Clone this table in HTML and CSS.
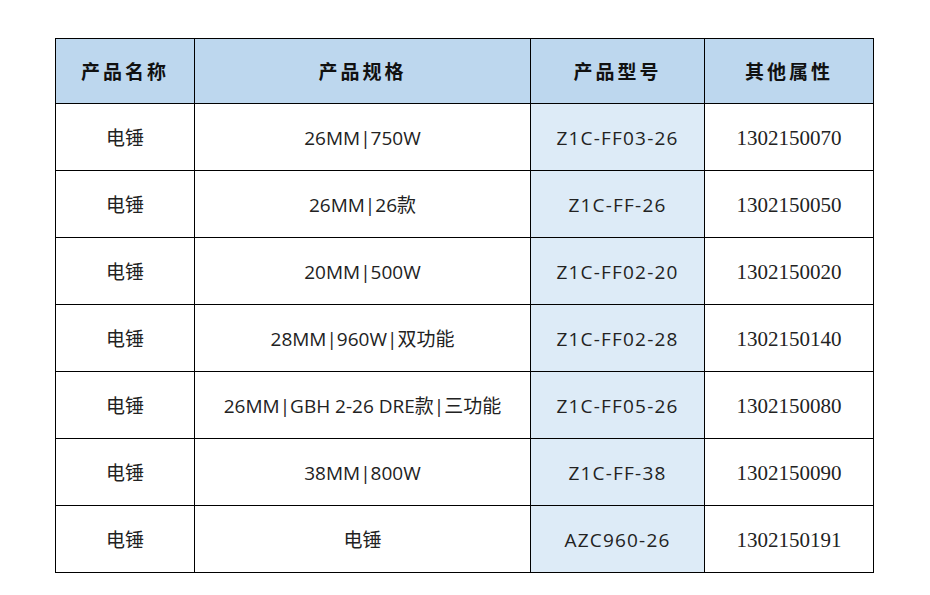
FILE: index.html
```html
<!DOCTYPE html>
<html lang="zh">
<head>
<meta charset="utf-8">
<link rel="stylesheet" href="styles.css">
</head>
<body>
<div class="wrap">
<table class="grid">
  <colgroup>
    <col class="c1"><col class="c2"><col class="c3"><col class="c4">
  </colgroup>
  <thead>
    <tr><th>产品名称</th><th>产品规格</th><th>产品型号</th><th>其他属性</th></tr>
  </thead>
  <tbody>
    <tr><td>电锤</td><td>26MM|750W</td><td class="model">Z1C-FF03-26</td><td class="num">1302150070</td></tr>
    <tr><td>电锤</td><td>26MM|26款</td><td class="model">Z1C-FF-26</td><td class="num">1302150050</td></tr>
    <tr><td>电锤</td><td>20MM|500W</td><td class="model">Z1C-FF02-20</td><td class="num">1302150020</td></tr>
    <tr><td>电锤</td><td>28MM|960W|双功能</td><td class="model">Z1C-FF02-28</td><td class="num">1302150140</td></tr>
    <tr><td>电锤</td><td>26MM|GBH 2-26 DRE款|三功能</td><td class="model">Z1C-FF05-26</td><td class="num">1302150080</td></tr>
    <tr><td>电锤</td><td>38MM|800W</td><td class="model">Z1C-FF-38</td><td class="num">1302150090</td></tr>
    <tr><td>电锤</td><td>电锤</td><td class="model">AZC960-26</td><td class="num">1302150191</td></tr>
  </tbody>
</table>
</div>
</body>
</html>
```

FILE: styles.css
```css
html, body {
  margin: 0;
  padding: 0;
  background: #ffffff;
}
.wrap {
  padding: 38px 0 0 55px;
}
.grid {
  border-collapse: collapse;
  table-layout: fixed;
  width: 818px;
  font-family: "Open Sans", "Noto Sans CJK SC", sans-serif;
  color: #222222;
}
.c1 { width: 139px; }
.c2 { width: 336px; }
.c3 { width: 174px; }
.c4 { width: 169px; }
.grid thead tr { height: 65px; }
.grid tbody tr { height: 67px; }
.grid th, .grid td {
  border: 1px solid #000000;
  text-align: center;
  vertical-align: middle;
  padding: 0;
  line-height: 24px;
}
.grid th {
  background: #bdd7ee;
  font-family: "Noto Sans CJK SC", sans-serif;
  font-size: 19px;
  font-weight: 700;
  letter-spacing: 3px;
  color: #111111;
}
.grid td {
  font-size: 19px;
  font-weight: 400;
  padding-top: 2px;
}
.grid td.model {
  background: #ddebf7;
  letter-spacing: 1.2px;
}
.grid td.num {
  font-family: "Liberation Serif", "Times New Roman", serif;
  font-size: 21px;
}
```
